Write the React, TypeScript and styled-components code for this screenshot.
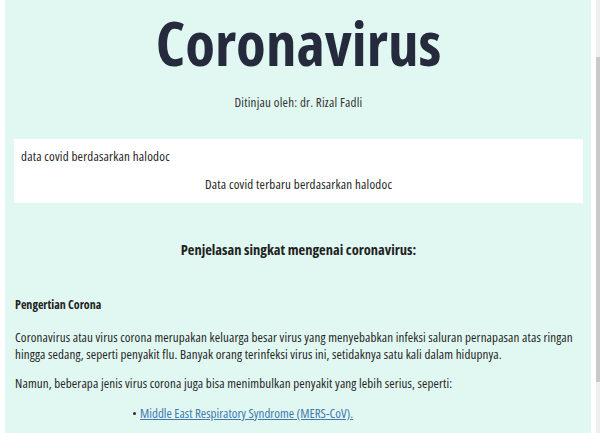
import React from "react";
import styled, { createGlobalStyle } from "styled-components";

const Global = createGlobalStyle`
  html, body { margin: 0; padding: 0; background: #ffffff; overflow: hidden; }
  body { font-family: "Open Sans", "Noto Sans", sans-serif; color: #262626; }
`;

const Page = styled.div`
  display: flex;
  height: 433px;
  overflow: hidden;
  padding-left: 5px;
  background: #ffffff;
`;

const Panel = styled.main`
  width: 586px;
  flex: none;
  background: #e1f8f2;
  padding: 0 9px 0 10px;
  box-sizing: border-box;
  font-stretch: condensed;
`;

const Gutter = styled.div`
  width: 5px;
  flex: none;
  background: #ffffff;
`;

const Track = styled.div`
  width: 4px;
  flex: none;
  background: #efefef;
  display: flex;
  flex-direction: column;
  padding-top: 57px;
`;

const Thumb = styled.div`
  height: 325px;
  background: #c9c9c9;
`;

const Title = styled.h1`
  margin: 13px 0 0;
  font-size: 61px;
  line-height: 60px;
  font-weight: 700;
  color: #262a3d;
  text-align: center;
`;

const Byline = styled.p`
  margin: 21px 0 0;
  font-size: 13px;
  letter-spacing: 0.2px;
  line-height: 17px;
  text-align: center;
  color: #333;
`;

const DataBox = styled.section`
  margin: 28px -1px 0 -1px;
  background: #ffffff;
  padding: 9px 7px 10px;
  display: flex;
  flex-direction: column;
  gap: 11px;
`;

const BoxText = styled.div<{ $center?: boolean }>`
  font-size: 13px;
  letter-spacing: 0.2px;
  line-height: 17px;
  color: #262626;
  text-align: ${(p) => (p.$center ? "center" : "left")};
`;

const Heading = styled.h2`
  margin: 37px 0 0;
  font-size: 14.5px;
  line-height: 20px;
  font-weight: 700;
  text-align: center;
  color: #222;
`;

const SubHeading = styled.h3`
  margin: 36px 0 0;
  font-size: 12px;
  line-height: 17px;
  font-weight: 700;
  color: #222;
`;

const Para = styled.p<{ $gap: number }>`
  margin: ${(p) => p.$gap}px 0 0;
  font-size: 13px;
  letter-spacing: 0.12px;
  line-height: 17px;
  color: #262626;
`;

const List = styled.ul`
  margin: 13px 0 0;
  padding-left: 118px;
  list-style: none;
  font-size: 13px;
  line-height: 17px;
`;

const Item = styled.li`
  color: #222;
  display: flex;
  align-items: center;
  gap: 4px;
  &::before {
    content: "";
    width: 3px;
    height: 3px;
    border-radius: 50%;
    background: #2a2a35;
  }
`;

const Link = styled.a`
  color: #4179ae;
  text-decoration: underline;
`;

export default function App() {
  return (
    <>
      <Global />
      <Page>
        <Panel>
          <Title>Coronavirus</Title>
          <Byline>Ditinjau oleh: dr. Rizal Fadli</Byline>
          <DataBox>
            <BoxText>data covid berdasarkan halodoc</BoxText>
            <BoxText $center>Data covid terbaru berdasarkan halodoc</BoxText>
          </DataBox>
          <Heading>Penjelasan singkat mengenai coronavirus:</Heading>
          <SubHeading>Pengertian Corona</SubHeading>
          <Para $gap={16}>
            Coronavirus atau virus corona merupakan keluarga besar virus yang menyebabkan infeksi saluran pernapasan atas ringan
            hingga sedang, seperti penyakit flu. Banyak orang terinfeksi virus ini, setidaknya satu kali dalam hidupnya.
          </Para>
          <Para $gap={12}>
            Namun, beberapa jenis virus corona juga bisa menimbulkan penyakit yang lebih serius, seperti:
          </Para>
          <List>
            <Item>
              <Link href="#">Middle East Respiratory Syndrome (MERS-CoV).</Link>
            </Item>
          </List>
        </Panel>
        <Gutter />
        <Track>
          <Thumb />
        </Track>
      </Page>
    </>
  );
}
